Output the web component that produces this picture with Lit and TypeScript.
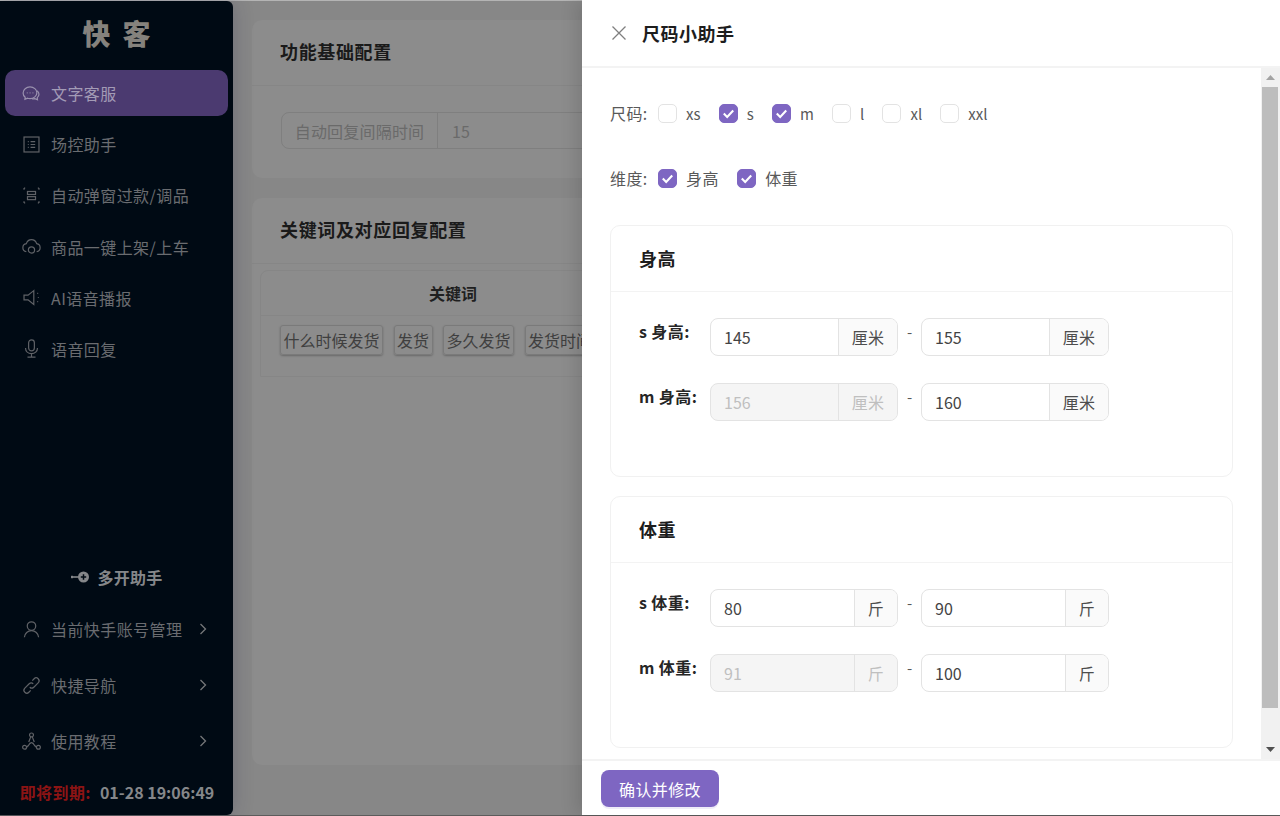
import { LitElement, html, css, svg } from "lit";
import { customElement } from "lit/decorators.js";

const ICONS: Record<string, unknown> = {
  chat: svg`<path d="M8.700 4.300c-3.300 0-6 2.300-6 5.200 0 1.500.7 2.800 1.800 3.700l-.2 1.900 2.300-1c.6.2 1.300.3 2.100.3 3.300 0 6-2.300 6-5.100 0-2.800-2.700-5-6-5z"/><path d="M14.700 7.700c1.100.7 1.800 1.800 1.800 3 0 1.200-.6 2.200-1.500 2.900l.2 1.900-2.200-1c-.9.2-1.800.2-2.700 0"/><path d="M5.900 9.500h.7M8.400 9.500h.7M10.900 9.500h.7"/>`,
  list: svg`<rect x="3.500" y="3.500" width="13" height="13"/><path d="M6.800 7.500h.8M6.800 10h.8M6.800 12.500h.8M9.200 7.500h4M9.200 10h4M9.200 12.500h4"/>`,
  scan: svg`<path d="M3.500 3.500h1M3.500 3.500v1.500M16.500 3.500h-1M16.500 3.500v1.500M3.500 16.500h1M3.500 16.500v-1.500M16.500 16.500h-1M16.500 16.500v-1.500"/><rect x="6.500" y="6.500" width="7" height="2.600"/><rect x="6.500" y="11" width="7" height="2.600"/>`,
  cloud: svg`<path d="M5.500 14.500C3.500 14 2.500 12.500 2.500 11c0-1.800 1.300-3.200 3-3.500C6.200 5.400 8 4 10 4s3.800 1.400 4.500 3.500c1.700.3 3 1.700 3 3.500 0 1.500-1 3-3 3.500"/><circle cx="10" cy="13" r="2.700"/>`,
  sound: svg`<path d="M12 4 7 8H3.500v4H7l5 4z"/><path d="M15 6.500h.8M15.500 10h.8M15 13.500h.8"/>`,
  mic: svg`<rect x="7.500" y="2.500" width="5" height="9.500" rx="2.500"/><path d="M4.800 9.500c0 3 2.300 5 5.200 5s5.200-2 5.200-5M10 14.500v3M6.500 17.500h7"/>`,
  user: svg`<circle cx="10" cy="7" r="3.700"/><path d="M3.800 16.800c.3-3.400 3-5.800 6.200-5.800s5.900 2.400 6.200 5.800"/>`,
  link: svg`<path d="M8.500 11.500c1 1 2.500 1 3.500 0l3.800-3.800c1-1 1-2.600 0-3.600s-2.500-1-3.500 0l-1.600 1.600"/><path d="M11.500 8.500c-1-1-2.500-1-3.500 0l-3.800 3.800c-1 1-1 2.600 0 3.600s2.500 1 3.500 0l1.600-1.600"/>`,
  nodes: svg`<circle cx="10" cy="4.300" r="1.700"/><circle cx="4" cy="15" r="1.700"/><circle cx="16" cy="15" r="1.700"/><path d="M9.300 6 7.600 10.500M10.700 6l1.700 4.500M5.700 15l1.600-1.500c.7-1.300 1.700-2.500 2.700-2.500s2 1.200 2.700 2.500l1.600 1.500"/>`,
};

const icon = (n: string) => html`<svg class="ic" viewBox="0 0 20 20">${ICONS[n]}</svg>`;
const chev = html`<svg class="chev" viewBox="0 0 8 12"><path d="M1.500 1 6.500 6l-5 5"/></svg>`;
const check = html`<svg viewBox="0 0 18 18" class="tick"><path d="M4 9.100 7.600 12.700 14 5.800"/></svg>`;

@customElement("app-root")
export class AppRoot extends LitElement {
  static styles = css`
    :host {
      display: block;
      position: relative;
      width: 1280px;
      height: 816px;
      overflow: hidden;
      background: #878787;
      font-family: "Noto Sans CJK SC", "Noto Sans", sans-serif;
      color: #262626;
    }
    .page {
      display: flex; height: 816px; box-sizing: border-box;
      border-top: 1px solid #b4b4b4; border-bottom: 1px solid #5c5c5c;
    }
    .side {
      width: 233px; flex: none; background: #000a14; border-radius: 0 6px 6px 0;
      display: flex; flex-direction: column; padding: 0 5px; box-sizing: border-box;
      color: #6a6c70; font-size: 16px; box-shadow: 0 0 20px rgba(30, 30, 70, .25); z-index: 1;
    }
    .logo {
      height: 69px; flex: none; display: flex; align-items: center; justify-content: center; gap: 12px;
      font-size: 28px; font-weight: 900; color: #85827d; padding-bottom: 5px; box-sizing: border-box;
    }
    .menu { display: flex; flex-direction: column; gap: 5.200px; }
    .item {
      height: 46px; display: flex; align-items: center; padding: 0 0 0 15px; gap: 8px; box-sizing: border-box;
      border-radius: 10px; white-space: nowrap; letter-spacing: .42px;
    }
    .item.on { background: #4b3a70; color: #a39bb6; }
    .ic { width: 23px; height: 23px; flex: none; fill: none; stroke: currentColor; stroke-width: 1.050; opacity: .9; }
    .grow { flex: 1; }
    .multi {
      display: flex; align-items: center; justify-content: center; gap: 8px;
      font-weight: 700; color: #85878a; height: 24px; margin-bottom: 17px; letter-spacing: .2px;
    }
    .multi svg { width: 19px; height: 12px; }
    .sub { display: flex; flex-direction: column; gap: 10px; }
    .sub .item { padding-right: 21px; }
    .sub .item span { flex: 1; }
    .chev { width: 8px; height: 12px; flex: none; fill: none; stroke: #75777a; stroke-width: 1.300; }
    .expire {
      height: 44px; flex: none; margin: 6px 0 1px; display: flex; align-items: center; justify-content: center;
      font-weight: 700; font-size: 16px; color: #85878a; white-space: nowrap; padding-left: 1px;
    }
    .expire b { color: #8c1414; font-weight: 700; margin-right: 9px; letter-spacing: .4px; }

    .main {
      flex: 1; padding: 19px 0 0 19px; display: flex; flex-direction: column; gap: 20px; min-width: 0;
    }
    .mcard { background: #8c8c8c; border-radius: 10px; width: 1000px; flex: none; }
    .mcard.a { height: 158px; }
    .mcard.b { height: 567px; }
    .mtitle {
      height: 66px; display: flex; align-items: center; padding: 0 0 3px 28px; border-bottom: 1px solid #868686;
      font-size: 18px; font-weight: 700; color: #1a1a1a; box-sizing: border-box; letter-spacing: .65px;
    }
    .mgroup {
      margin: 26px 0 0 29px; height: 37px; width: 600px; display: flex; border: 1px solid #7f7f7f; border-radius: 8px;
      box-sizing: border-box; color: #6a6a6a; font-size: 16px; align-items: center;
    }
    .mgroup .l { width: 156px; height: 100%; border-right: 1px solid #7f7f7f; display: flex; align-items: center; justify-content: center; box-sizing: border-box; letter-spacing: .2px; }
    .mgroup .r { padding-left: 14px; }
    .tbl { margin: 6px 0 0 8px; border: 1px solid #868686; border-radius: 8px 8px 0 0; width: 900px; height: 107px; box-sizing: border-box; }
    .th {
      height: 44px; width: 384px;
      display: flex; align-items: center; justify-content: center; font-size: 16px; font-weight: 700; color: #1f1f1f;
    }
    .thline { border-bottom: 1px solid #868686; }
    .tags { display: flex; gap: 10.500px; padding: 9px 0 0 19px; }
    .tag {
      height: 30px; box-sizing: border-box; padding: 0 2.500px; border: 1px solid #7a7a7a; border-radius: 3px;
      display: flex; align-items: center; font-size: 16px; color: #3f3f3f; white-space: nowrap;
      box-shadow: 0 1px 2px rgba(0, 0, 0, .25);
    }

    .drawer {
      position: absolute; top: 0; right: 0; bottom: 1px; width: 698px; background: #fff;
      display: flex; flex-direction: column; box-shadow: -6px 0 16px rgba(0, 0, 0, .12); z-index: 2;
    }
    .dhead {
      height: 68px; flex: none; box-sizing: border-box; border-bottom: 2px solid #f3f3f3;
      display: flex; align-items: center; padding-left: 29px; gap: 15px;
      font-size: 18px; font-weight: 700; color: #1d1d1d; letter-spacing: .5px;
    }
    .dhead svg { width: 16px; height: 16px; fill: none; stroke: #7f7f7f; stroke-width: 1.300; }
    .dbody { flex: 1; display: flex; min-height: 0; }
    .content { flex: 1; padding: 0 28px; min-width: 0; overflow: hidden; }
    .bar { width: 19px; flex: none; background: #f1f1f1; display: flex; flex-direction: column; align-items: center; padding-right: 1px; box-sizing: border-box; }
    .arrow { height: 19px; flex: none; display: flex; align-items: center; justify-content: center; }
    .arrow svg { width: 9px; height: 5px; }
    .thumb { width: 16px; height: 621px; flex: none; background: #bdbdbd; }
    .tracksp { flex: 1; }
    .row { display: flex; align-items: center; font-size: 15px; color: #595959; height: 20px; }
    .row.first { margin-top: 35px; }
    .row.second { margin-top: 45px; }
    .row .lab { width: 48px; flex: none; font-size: 16px; letter-spacing: .4px; white-space: nowrap; }
    .opts { display: flex; gap: 18.200px; }
    .opts.cjk { font-size: 16px; letter-spacing: .4px; gap: 18.400px; }
    .opt { display: flex; align-items: center; gap: 9px; }
    .box {
      width: 19px; height: 19px; box-sizing: border-box; border: 1px solid #e3e3e3; border-radius: 5px; background: #fff; flex: none;
      display: flex;
    }
    .box.on { background: #7e66c2; border-color: #7e66c2; }
    .tick { width: 17px; height: 17px; fill: none; stroke: #fff; stroke-width: 2.200; }
    .card {
      border: 1px solid #f1f1f1; border-radius: 10px; height: 252px; box-sizing: border-box; width: 623px;
      margin-top: 19px;
    }
    .card.top { margin-top: 37px; }
    .chead {
      height: 66px; box-sizing: border-box; border-bottom: 1px solid #f3f3f3; display: flex; align-items: center;
      padding: 0 0 2px 28px; font-size: 18px; font-weight: 700; color: #1d1d1d; letter-spacing: .5px;
    }
    .cbody { padding: 26px 0 0 28px; display: flex; flex-direction: column; gap: 27px; }
    .frow { display: flex; height: 38px; }
    .flab { width: 71px; flex: none; font-size: 16px; font-weight: 700; color: #262626; line-height: 26px; white-space: nowrap; letter-spacing: .4px; }
    .group {
      width: 188px; height: 38px; box-sizing: border-box; display: flex; border: 1px solid #e3e3e3; border-radius: 8px; overflow: hidden;
      font-size: 16px; color: #434343; background: #fff;
    }
    .group .val { flex: 1; padding-left: 13px; display: flex; align-items: center; }
    .group .unit {
      width: 59px; box-sizing: border-box; flex: none; border-left: 1px solid #e3e3e3; background: #fafafa;
      display: flex; align-items: center; justify-content: center; letter-spacing: .3px; color: #4d4d4d;
    }
    .group .unit.sm { width: 43px; }
    .group.off, .group.off .unit { background: #f5f5f5; color: #bfbfbf; }
    .dash { width: 23px; text-align: center; font-size: 15px; line-height: 27px; color: #595959; }
    .dfoot {
      height: 56px; flex: none; box-sizing: border-box; border-top: 2px solid #f3f3f3; padding: 9px 0 0 19px;
    }
    .btn {
      width: 118px; height: 37px; border-radius: 8px; background: #7e66c2; color: #fff; font-size: 16px;
      display: flex; align-items: center; justify-content: center; letter-spacing: .4px; box-shadow: 0 2px 0 rgba(126, 102, 194, .12);
    }
  `;

  private opt(label: string, on: boolean) {
    return html`<div class="opt"><span class="box ${on ? "on" : ""}">${on ? check : ""}</span><span>${label}</span></div>`;
  }

  private group(v: string, unit: string, off = false) {
    return html`<div class="group ${off ? "off" : ""}"><div class="val">${v}</div><div class="unit ${unit.length === 1 ? "sm" : ""}">${unit}</div></div>`;
  }

  private card(title: string, unit: string, a: string[], b: string[]) {
    return html`<section class="card ${title === "身高" ? "top" : ""}">
      <div class="chead">${title}</div>
      <div class="cbody">
        <div class="frow"><div class="flab">s ${title}:</div>${this.group(a[0], unit)}<div class="dash">-</div>${this.group(a[1], unit)}</div>
        <div class="frow"><div class="flab">m ${title}:</div>${this.group(b[0], unit, true)}<div class="dash">-</div>${this.group(b[1], unit)}</div>
      </div>
    </section>`;
  }

  render() {
    return html`
      <div class="page">
        <aside class="side">
          <div class="logo"><span>快</span><span>客</span></div>
          <div class="menu">
            <div class="item on">${icon("chat")}<span>文字客服</span></div>
            <div class="item">${icon("list")}<span>场控助手</span></div>
            <div class="item">${icon("scan")}<span>自动弹窗过款/调品</span></div>
            <div class="item">${icon("cloud")}<span>商品一键上架/上车</span></div>
            <div class="item">${icon("sound")}<span>AI语音播报</span></div>
            <div class="item">${icon("mic")}<span>语音回复</span></div>
          </div>
          <div class="grow"></div>
          <div class="multi">
            <svg viewBox="0 0 19 12"><path d="M0 6h8" stroke="#85878a" stroke-width="1.600" /><rect x="0" y="4.800" width="2" height="2.400" fill="#85878a"/><circle cx="12.500" cy="6" r="5.500" fill="#85878a"/><path d="M9.800 6h5.400M12.500 3.300v5.400" stroke="#000a14" stroke-width="1.500"/></svg>
            <span>多开助手</span>
          </div>
          <div class="sub">
            <div class="item">${icon("user")}<span>当前快手账号管理</span>${chev}</div>
            <div class="item">${icon("link")}<span>快捷导航</span>${chev}</div>
            <div class="item">${icon("nodes")}<span>使用教程</span>${chev}</div>
          </div>
          <div class="expire"><b>即将到期:</b>01-28 19:06:49</div>
        </aside>
        <main class="main">
          <section class="mcard a">
            <div class="mtitle">功能基础配置</div>
            <div class="mgroup"><div class="l">自动回复间隔时间</div><div class="r">15</div></div>
          </section>
          <section class="mcard b">
            <div class="mtitle">关键词及对应回复配置</div>
            <div class="tbl">
              <div class="th">关键词</div>
              <div class="thline"></div>
              <div class="tags">
                <span class="tag">什么时候发货</span><span class="tag">发货</span><span class="tag">多久发货</span><span class="tag">发货时间</span>
              </div>
            </div>
          </section>
        </main>
      </div>
      <div class="drawer">
        <header class="dhead">
          <svg viewBox="0 0 16 16"><path d="M1.500 1.500l13 13M14.500 1.500l-13 13"/></svg>
          <span>尺码小助手</span>
        </header>
        <div class="dbody">
          <div class="content">
            <div class="row first"><span class="lab">尺码:</span>
              <div class="opts">${this.opt("xs", false)}${this.opt("s", true)}${this.opt("m", true)}${this.opt("l", false)}${this.opt("xl", false)}${this.opt("xxl", false)}</div>
            </div>
            <div class="row second"><span class="lab">维度:</span>
              <div class="opts cjk">${this.opt("身高", true)}${this.opt("体重", true)}</div>
            </div>
            ${this.card("身高", "厘米", ["145", "155"], ["156", "160"])}
            ${this.card("体重", "斤", ["80", "90"], ["91", "100"])}
          </div>
          <div class="bar">
            <div class="arrow"><svg viewBox="0 0 9 5"><path d="M4.500 0 9 5H0z" fill="#a3a3a3"/></svg></div>
            <div class="thumb"></div>
            <div class="tracksp"></div>
            <div class="arrow"><svg viewBox="0 0 9 5"><path d="M0 0h9L4.500 5z" fill="#505050"/></svg></div>
          </div>
        </div>
        <footer class="dfoot"><div class="btn">确认并修改</div></footer>
      </div>
    `;
  }
}
